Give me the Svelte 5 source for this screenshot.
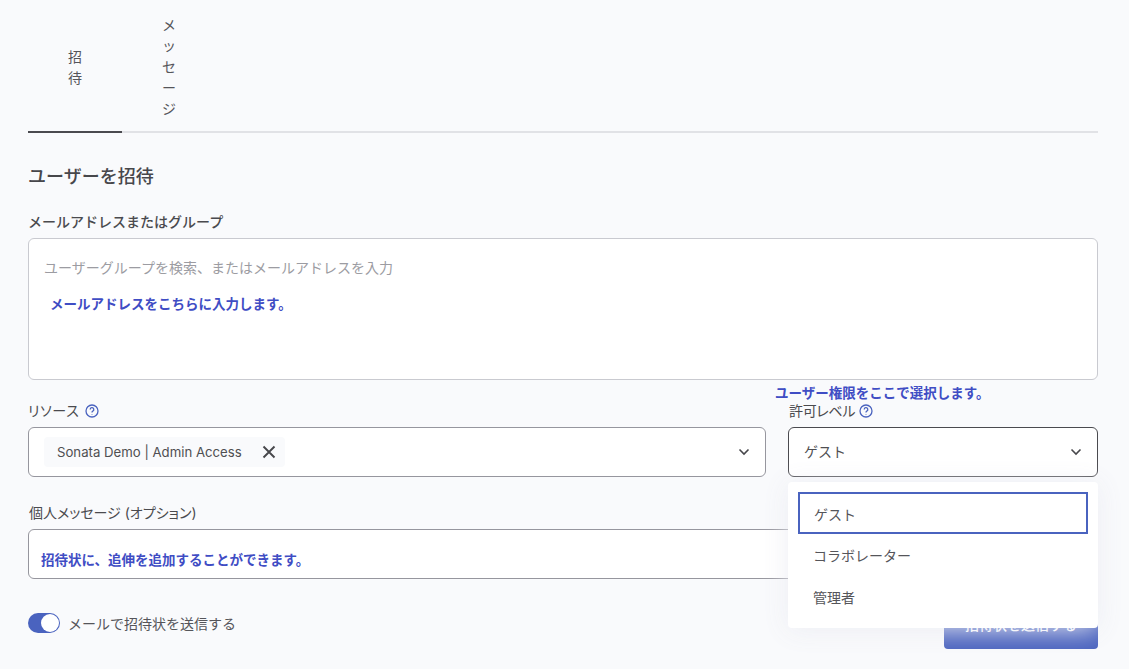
<script>
	let tabs = ['招待', 'メッセージ'];
	let active = 0;
	let options = ['ゲスト', 'コラボレーター', '管理者'];
</script>

<div class="page">
	<div class="tabs">
		{#each tabs as tab, i}
			<button class="tab" class:active={active === i} onclick={() => (active = i)}>{tab}</button>
		{/each}
	</div>

	<h2>ユーザーを招待</h2>

	<div class="label first">メールアドレスまたはグループ</div>
	<div class="box emails">
		<span class="placeholder">ユーザーグループを検索、またはメールアドレスを入力</span>
		<span class="note note-email">メールアドレスをこちらに入力します。</span>
	</div>

	<div class="row">
		<div class="col">
			<div class="label help wide">リソース
				<svg class="q" viewBox="0 0 14 14"><circle cx="7" cy="7" r="6" /><path d="M5.2 5.5a1.8 1.8 0 1 1 2.6 1.6c-.6.3-.8.7-.8 1.3" /><path d="M7 10.2v.6" /></svg>
			</div>
			<div class="box select">
				<span class="chip">Sonata Demo | Admin Access
					<svg class="x" viewBox="0 0 14 14"><path d="M1.5 1.5l11 11M12.5 1.5l-11 11" /></svg>
				</span>
				<svg class="chev" viewBox="0 0 12 8"><path d="M1.5 1.5L6 6l4.5-4.5" /></svg>
			</div>
		</div>
		<div class="col">
			<span class="note note-level">ユーザー権限をここで選択します。</span>
			<div class="label help indent">許可レベル
				<svg class="q" viewBox="0 0 14 14"><circle cx="7" cy="7" r="6" /><path d="M5.2 5.5a1.8 1.8 0 1 1 2.6 1.6c-.6.3-.8.7-.8 1.3" /><path d="M7 10.2v.6" /></svg>
			</div>
			<div class="box select open">
				<span class="value">ゲスト</span>
				<svg class="chev" viewBox="0 0 12 8"><path d="M1.5 1.5L6 6l4.5-4.5" /></svg>
			</div>
			<ul class="menu">
				{#each options as opt, i}
					<li class:focused={i === 0}>{opt}</li>
				{/each}
			</ul>
		</div>
	</div>

	<div class="label msg">個人メッセージ (オプション)</div>
	<div class="box message">
		<span class="note-msg">招待状に、追伸を追加することができます。</span>
	</div>

	<div class="footer">
		<div class="toggle-wrap">
			<span class="toggle"><span class="knob"></span></span>
			<span class="toggle-label">メールで招待状を送信する</span>
		</div>
		<button class="send">招待状を送信する</button>
	</div>
</div>

<style>
	:global(body) {
		background: #f9fafc;
		overflow: hidden;
	}

	.page {
		padding: 0 31px 20px 28px;
		font-family: Inter, "Noto Sans CJK JP", sans-serif;
		font-size: 14px;
		color: #4f4f52;
	}

	.tabs {
		display: flex;
		align-items: center;
		height: 133px;
		border-bottom: 2px solid #e1e2e6;
		box-sizing: border-box;
	}

	.tab {
		width: 94px;
		height: 133px;
		padding: 2px 40px 0;
		box-sizing: border-box;
		border: 0;
		background: none;
		font: inherit;
		line-height: 21px;
		color: #55555a;
		margin-bottom: -2px;
		border-bottom: 2px solid transparent;
	}

	.tab.active {
		border-bottom-color: #4a4a4f;
	}

	h2 {
		margin: 31px 0 0;
		font-size: 18px;
		line-height: 26px;
		font-weight: 500;
		color: #47474b;
	}

	.label {
		font-size: 14px;
		line-height: 20px;
		color: #4a4a4e;
	}

	.label.first {
		margin-top: 22px;
		margin-bottom: 6px;
		font-weight: 500;
	}

	.box {
		background: #fff;
		border: 1px solid #c9cad0;
		border-radius: 6px;
		box-sizing: border-box;
		position: relative;
	}

	.emails {
		height: 142px;
		padding: 19px 15px;
	}

	.placeholder {
		color: #9c9ca2;
		line-height: 20px;
	}

	.note {
		position: absolute;
		font-weight: 700;
		font-size: 13.5px;
		line-height: 18px;
		color: #3f4dc4;
		white-space: nowrap;
	}

	.note-email {
		left: 21px;
		top: 56px;
	}

	.note-level {
		left: -13px;
		top: -17px;
	}

	.row {
		display: grid;
		grid-template-columns: 738px 310px;
		gap: 22px;
		margin-top: 21px;
	}

	.col {
		position: relative;
	}

	.help {
		display: flex;
		align-items: center;
		gap: 4px;
		margin-bottom: 6px;
		font-feature-settings: "palt";
		letter-spacing: -0.3px;
	}

	.help.wide {
		gap: 5px;
		letter-spacing: 0.7px;
	}

	.indent {
		padding-left: 1px;
	}

	.q {
		width: 14px;
		height: 14px;
		fill: none;
		stroke: #4a63bf;
		stroke-width: 1.3;
	}

	.select {
		height: 50px;
		display: flex;
		align-items: center;
		justify-content: space-between;
		padding: 0 15px;
		border-color: #96969e;
	}

	.select.open {
		border-color: #4a4a4f;
	}

	.chip {
		display: flex;
		align-items: center;
		justify-content: space-between;
		width: 241px;
		height: 30px;
		padding: 0 9px 0 13px;
		box-sizing: border-box;
		background: #f9fafc;
		border-radius: 4px;
		color: #4f4f52;
		font-size: 13.2px;
		white-space: nowrap;
	}

	.x {
		width: 14px;
		height: 14px;
		fill: none;
		stroke: #47474b;
		stroke-width: 1.9;
	}

	.chev {
		width: 12px;
		height: 8px;
		fill: none;
		stroke: #47474b;
		stroke-width: 1.6;
	}

	.value {
		padding: 0 0 2px 0;
	}

	.menu {
		position: absolute;
		left: 0;
		right: 0;
		top: 81px;
		z-index: 2;
		height: 146px;
		margin: 0;
		padding: 10px;
		box-sizing: border-box;
		list-style: none;
		background: #fff;
		border-radius: 4px;
		box-shadow: 0 2px 26px rgba(236, 237, 243, 0.95);
	}

	.menu li {
		height: 42px;
		line-height: 44px;
		padding-left: 15px;
		box-sizing: border-box;
		color: #55555a;
	}

	.menu li.focused {
		border: 2px solid #4a63bf;
		line-height: 41px;
		padding-left: 14px;
	}

	.msg {
		margin-top: 26px;
		margin-bottom: 6px;
		padding-left: 1px;
		font-feature-settings: "palt";
	}

	.message {
		height: 50px;
		border-color: #96969e;
		display: flex;
		align-items: center;
		padding: 10px 12px 0;
	}

	.note-msg {
		font-weight: 700;
		font-size: 13.5px;
		color: #3f4dc4;
	}

	.footer {
		display: flex;
		justify-content: space-between;
		align-items: center;
		margin-top: 20px;
	}

	.toggle-wrap {
		display: flex;
		align-items: center;
		gap: 8px;
		margin-top: -2px;
	}

	.toggle {
		width: 32px;
		height: 20px;
		border-radius: 10px;
		background: #4a63bf;
		position: relative;
	}

	.knob {
		position: absolute;
		right: 1px;
		top: 1px;
		width: 18px;
		height: 18px;
		border-radius: 50%;
		background: #fff;
	}

	.toggle-label {
		color: #55555a;
	}

	.send {
		width: 154px;
		height: 50px;
		border: 0;
		border-radius: 4px;
		background: #4a63bf;
		color: #fff;
		font: inherit;
		font-weight: 500;
	}
</style>
